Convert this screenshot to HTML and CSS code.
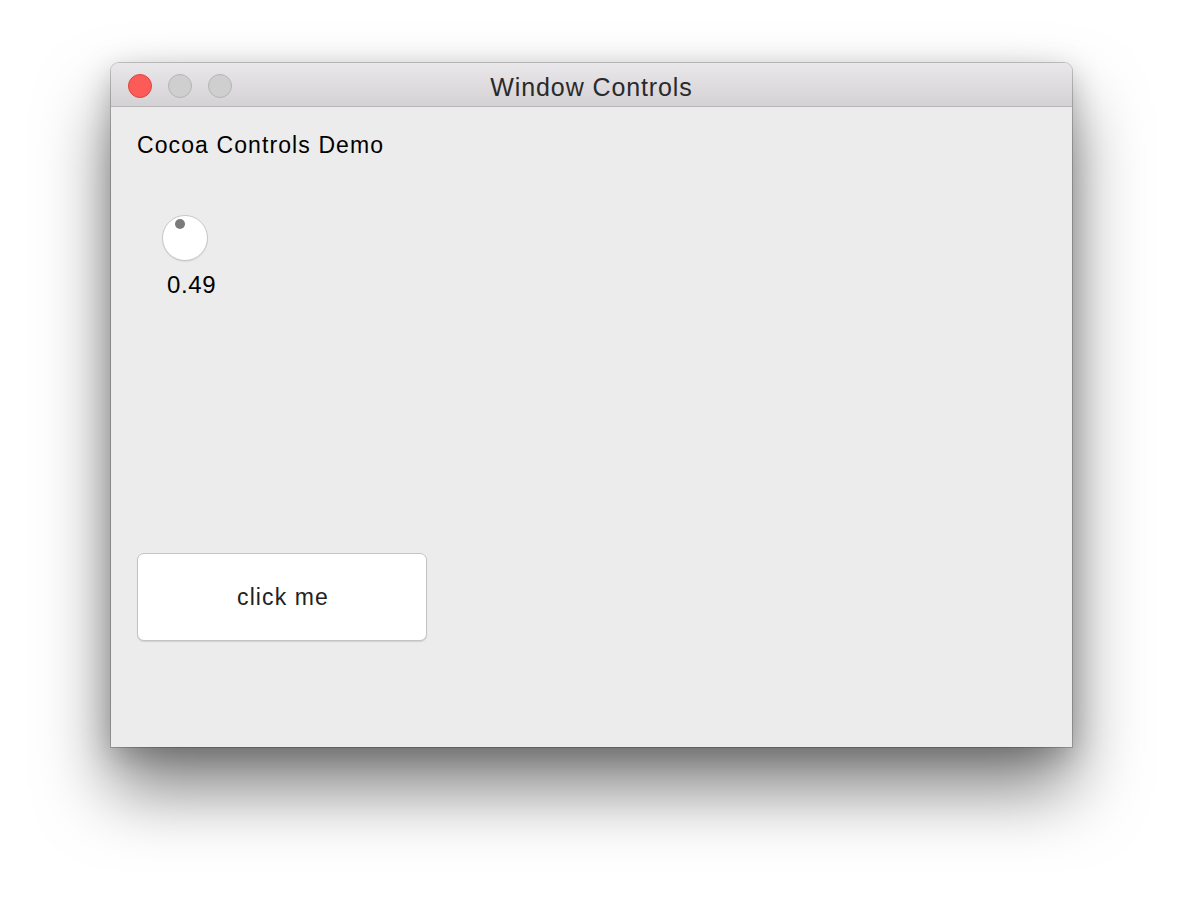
FILE: index.html
```html
<!DOCTYPE html>
<html>
<head>
<meta charset="utf-8">
<link rel="stylesheet" href="styles.css">
</head>
<body>
<div class="window">
  <div class="titlebar">
    <div class="lights">
      <span class="light close"></span>
      <span class="light"></span>
      <span class="light"></span>
    </div>
    <div class="title">Window Controls</div>
  </div>
  <div class="content">
    <div class="heading">Cocoa Controls Demo</div>
    <div class="knob-group">
      <div class="knob"><span class="knob-dot"></span></div>
      <div class="knob-value">0.49</div>
    </div>
    <button class="btn">click me</button>
  </div>
</div>
</body>
</html>
```
FILE: styles.css
```css
html, body {
  margin: 0;
  padding: 0;
  background: #ffffff;
  width: 1184px;
  height: 908px;
  overflow: hidden;
}
body {
  padding-top: 63px;
  padding-left: 111px;
  box-sizing: border-box;
  font-family: "Liberation Sans", Arial, sans-serif;
}
.window {
  width: 961px;
  height: 684px;
  background: #ececec;
  border-radius: 8px 8px 0 0;
  box-shadow: 0 42px 70px rgba(0, 0, 0, 0.5), 0 8px 30px rgba(0, 0, 0, 0.22), 0 0 0 1px rgba(0, 0, 0, 0.2);
  display: flex;
  flex-direction: column;
  overflow: hidden;
}
.titlebar {
  height: 43px;
  flex: 0 0 auto;
  background: linear-gradient(#e9e7e9, #d4d2d4);
  border-bottom: 1px solid #b8b6b8;
  display: flex;
  align-items: center;
  position: relative;
}
.lights {
  display: flex;
  gap: 16px;
  padding-left: 17px;
  padding-top: 2px;
}
.light {
  width: 22px;
  height: 22px;
  border-radius: 50%;
  background: #d0cfd0;
  border: 1px solid #b5b4b5;
}
.light.close {
  background: #fc5b57;
  border-color: #de4440;
}
.title {
  position: absolute;
  left: 0;
  right: 0;
  top: 0;
  bottom: 0;
  display: flex;
  align-items: center;
  justify-content: center;
  font-size: 25px;
  letter-spacing: 0.9px;
  color: #2b2a2b;
  padding-top: 6px;
}
.content {
  flex: 1;
  display: flex;
  flex-direction: column;
  align-items: flex-start;
  padding: 22px 0 0 26px;
  color: #000;
}
.heading {
  font-size: 23px;
  letter-spacing: 1.1px;
  line-height: 32px;
}
.knob-group {
  margin-top: 54px;
  margin-left: 16px;
  display: flex;
  flex-direction: column;
  align-items: center;
}
.knob {
  width: 44px;
  height: 44px;
  border-radius: 50%;
  background: #ffffff;
  border: 1px solid #c6c6c6;
  position: relative;
  box-shadow: 0 1px 1px rgba(0, 0, 0, 0.08);
}
.knob-dot {
  position: absolute;
  width: 10px;
  height: 10px;
  border-radius: 50%;
  background: #7b7b7b;
  left: 12px;
  top: 3px;
}
.knob-value {
  margin-top: 10px;
  margin-left: 14px;
  font-size: 24px;
  letter-spacing: 0.6px;
  line-height: 28px;
}
.btn {
  margin-top: 254px;
  width: 290px;
  height: 88px;
  background: #ffffff;
  border: 1px solid #c4c4c4;
  border-radius: 7px;
  box-shadow: 0 1px 1px rgba(0, 0, 0, 0.12);
  font-family: "Liberation Sans", Arial, sans-serif;
  font-size: 23px;
  letter-spacing: 1.1px;
  color: #222;
  padding: 0 0 0 2px;
}
```
